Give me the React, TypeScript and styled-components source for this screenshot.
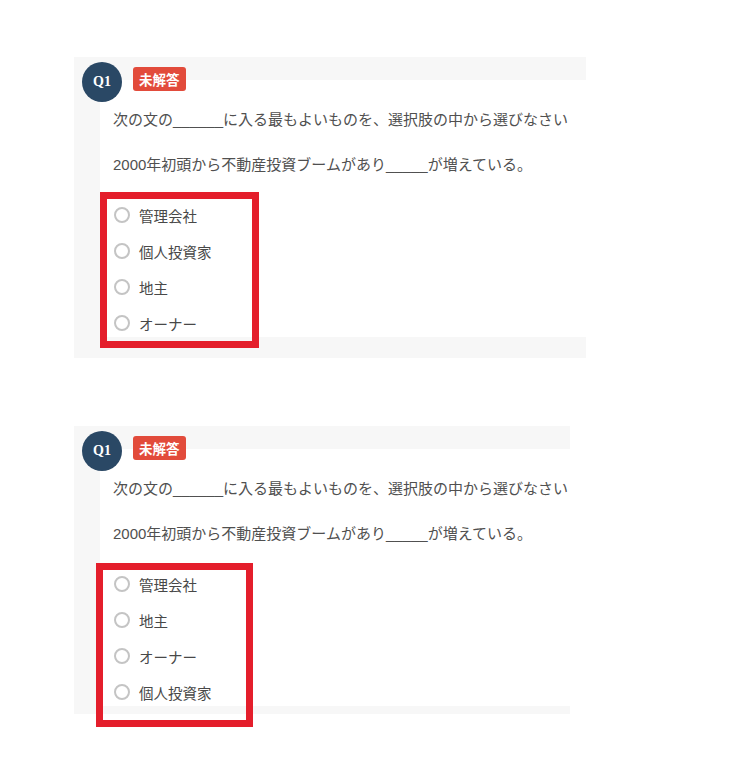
import React from 'react';
import styled, { createGlobalStyle } from 'styled-components';

// ── Data ──────────────────────────────────────────────────

interface Question {
  id: string;
  prompt: string;
  sentence: string;
  choices: string[];
  width: number;
  bottomPad: number;
  mark: { left: number; top: number; width: number; height: number };
}

const PROMPT = '次の文の______に入る最もよいものを、選択肢の中から選びなさい';
const SENTENCE = '2000年初頭から不動産投資ブームがあり_____が増えている。';

const questions: Question[] = [
  {
    id: 'a',
    prompt: PROMPT,
    sentence: SENTENCE,
    choices: ['管理会社', '個人投資家', '地主', 'オーナー'],
    width: 512,
    bottomPad: 21,
    mark: { left: 26, top: 135, width: 159, height: 156 },
  },
  {
    id: 'b',
    prompt: PROMPT,
    sentence: SENTENCE,
    choices: ['管理会社', '地主', 'オーナー', '個人投資家'],
    width: 496,
    bottomPad: 8,
    mark: { left: 22, top: 137, width: 157, height: 164 },
  },
];

// ── Styled ────────────────────────────────────────────────

const GlobalStyle = createGlobalStyle`
  body {
    margin: 0;
    background: #ffffff;
    font-family: "Liberation Sans", "Noto Sans CJK JP", sans-serif;
  }
`;

const Page = styled.div`
  display: flex;
  flex-direction: column;
  gap: 68px;
  padding: 57px 0 56px 74px;
`;

const Card = styled.section<{ $width: number; $bottom: number }>`
  position: relative;
  width: ${({ $width }) => $width}px;
  box-sizing: border-box;
  background: #f7f7f7;
  padding: 23px 0 ${({ $bottom }) => $bottom}px 26px;
`;

const Marker = styled.div`
  position: absolute;
  left: 8px;
  top: 5px;
  display: flex;
  align-items: center;
  gap: 11px;
  z-index: 1;
`;

const Number = styled.span`
  width: 40px;
  height: 40px;
  border-radius: 50%;
  background: #2a4865;
  color: #ffffff;
  display: flex;
  align-items: center;
  justify-content: center;
  font-family: "Liberation Serif", "DejaVu Serif", serif;
  font-weight: 700;
  font-size: 14px;
`;

const Status = styled.span`
  margin-top: -6px;
  height: 24px;
  padding: 0 6px;
  border-radius: 3px;
  background: #e24b3b;
  color: #ffffff;
  display: flex;
  align-items: center;
  font-family: "Noto Sans CJK JP", sans-serif;
  font-weight: 700;
  font-size: 13.5px;
`;

const Body = styled.div`
  background: #ffffff;
  padding: 28px 0 4px 13px;
  color: #505050;
`;

const Text = styled.p`
  margin: 0 0 21px;
  font-size: 15px;
  line-height: 24px;
  white-space: nowrap;
`;

const Choices = styled.ul`
  list-style: none;
  margin: 28px 0 0;
  padding: 0;
  display: flex;
  flex-direction: column;
  gap: 16px;
`;

const Choice = styled.li`
  display: flex;
  align-items: center;
  gap: 9px;
  height: 20px;
  font-size: 14.5px;
  color: #484848;
`;

const Radio = styled.span`
  width: 16px;
  height: 16px;
  box-sizing: border-box;
  border: 2px solid #c4c4c4;
  border-radius: 50%;
  background: #ffffff;
  margin-left: 1px;
`;

const Highlight = styled.div`
  position: absolute;
  box-sizing: border-box;
  border: 7px solid #e41e2b;
  pointer-events: none;
`;

// ── Component ─────────────────────────────────────────────

const QuestionCard: React.FC<{ q: Question }> = ({ q }) => (
  <Card $width={q.width} $bottom={q.bottomPad}>
    <Marker>
      <Number>Q1</Number>
      <Status>未解答</Status>
    </Marker>
    <Body>
      <Text>{q.prompt}</Text>
      <Text>{q.sentence}</Text>
      <Choices>
        {q.choices.map((c) => (
          <Choice key={c}>
            <Radio />
            {c}
          </Choice>
        ))}
      </Choices>
    </Body>
    <Highlight
      style={{
        left: q.mark.left,
        top: q.mark.top,
        width: q.mark.width,
        height: q.mark.height,
      }}
    />
  </Card>
);

export default function App() {
  return (
    <>
      <GlobalStyle />
      <Page>
        {questions.map((q) => (
          <QuestionCard key={q.id} q={q} />
        ))}
      </Page>
    </>
  );
}
